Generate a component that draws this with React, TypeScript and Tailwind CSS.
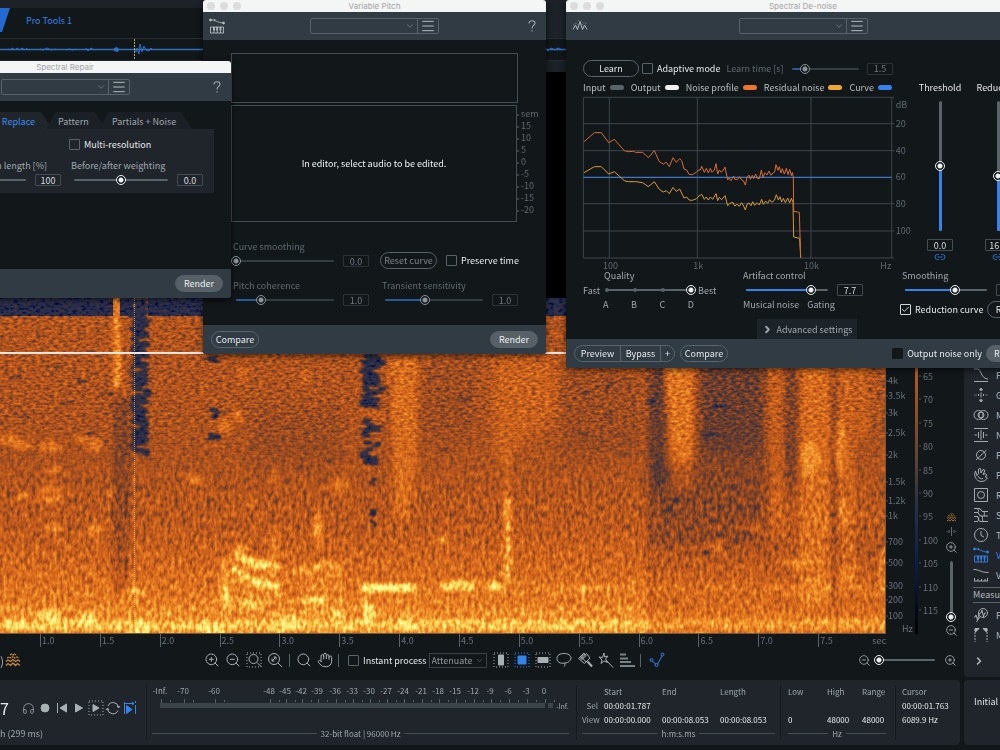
import React, { useState } from 'react';
import { Check, ChevronDown, ChevronRight, Hand, Headphones, Link2, Menu, Search, ZoomIn, ZoomOut } from 'lucide-react';
import clsx from 'clsx';

interface SliderProps {
    label: string;
    start: number;
    muted?: boolean;
    plain?: boolean;
    vertical?: boolean;
    className?: string;
}

const thumbStyle =
    '[&::-webkit-slider-thumb]:size-[10px] [&::-webkit-slider-thumb]:appearance-none [&::-webkit-slider-thumb]:rounded-full [&::-webkit-slider-thumb]:border [&::-webkit-slider-thumb]:border-current [&::-webkit-slider-thumb]:bg-[radial-gradient(circle,currentColor_0_2px,#12171a_3px)]';

function Slider({ label, start, muted, plain, vertical, className }: SliderProps) {
    const [value, setValue] = useState(start);
    const fill = plain ? '' : muted ? 'bg-[#2a5a96]' : 'bg-[#3583ea]';

    return (
        <div className={clsx('grid *:col-start-1 *:row-start-1', vertical ? 'justify-items-center' : 'items-center', className)}>
            <div
                className={clsx(
                    'flex rounded-full',
                    vertical ? 'my-[5px] w-[3px] flex-col justify-end' : 'mx-[5px] h-[2px]',
                    muted ? 'bg-[#343d42]' : 'bg-[#59636a]',
                )}
            >
                <div className={clsx('rounded-full', fill)} style={vertical ? { height: `${value}%` } : { width: `${value}%` }} />
            </div>
            <input
                type="range"
                aria-label={label}
                value={value}
                onChange={(e) => setValue(Number(e.target.value))}
                className={clsx(
                    'm-0 appearance-none bg-transparent outline-none',
                    thumbStyle,
                    vertical ? 'h-full w-[10px] [direction:rtl] [writing-mode:vertical-lr]' : 'h-[10px] w-full min-w-0',
                    muted ? 'text-[#8c9499]' : 'text-[#eef1f2]',
                )}
            />
        </div>
    );
}

function ValueBox({ label, value, muted }: { label: string; value: string; muted?: boolean }) {
    return (
        <input
            type="text"
            aria-label={label}
            defaultValue={value}
            className={clsx(
                'h-[12px] w-[26px] shrink-0 rounded-[1px] border bg-transparent p-0 text-center text-[9px] leading-[10px] outline-none',
                muted ? 'border-[#2b3338] text-[#737b80]' : 'border-[#434c52] text-[#d8dcde]',
            )}
        />
    );
}

interface ParamProps {
    label: string;
    value: string;
    start: number;
    muted?: boolean;
    plain?: boolean;
    className?: string;
}

function Param({ label, value, start, muted, plain, className }: ParamProps) {
    return (
        <div className={clsx('flex flex-col', className)}>
            <span className={clsx('pl-0.5', muted ? 'text-[#60696e]' : 'text-[#a0a8ac]')}>{label}</span>
            <div className="flex h-4 items-center gap-1">
                <Slider label={label} start={start} muted={muted} plain={plain} className="flex-1" />
                <ValueBox label={label} value={value} muted={muted} />
            </div>
        </div>
    );
}

function Checkbox({ label, checked = false, filled }: { label: string; checked?: boolean; filled?: boolean }) {
    return (
        <label className="flex items-center gap-1 text-[#e6e9eb]">
            <span className="grid size-[11px] *:col-start-1 *:row-start-1">
                <input
                    type="checkbox"
                    defaultChecked={checked}
                    className={clsx(
                        'peer m-0 size-[11px] appearance-none rounded-[1px] border checked:border-[#d0d5d8]',
                        filled ? 'border-[#12171a] bg-[#12171a]' : 'border-[#59636a]',
                    )}
                />
                <Check className="pointer-events-none invisible m-px size-[9px] text-white peer-checked:visible" strokeWidth={2} />
            </span>
            {label}
        </label>
    );
}

function Pill({ children, solid, muted, className }: { children: React.ReactNode; solid?: boolean; muted?: boolean; className?: string }) {
    return (
        <button
            type="button"
            className={clsx(
                'h-[17px] shrink-0 rounded-full border text-center leading-[15px]',
                solid ? 'border-[#566066] bg-[#566066] text-[#eceff0]' : muted ? 'border-[#566066] text-[#7c8489]' : 'border-[#59636a] text-[#e4e7e9]',
                className,
            )}
        >
            {children}
        </button>
    );
}

interface PluginWindowProps {
    title: string;
    className: string;
    icon?: React.ReactNode;
    footer: React.ReactNode;
    children: React.ReactNode;
}

function PluginWindow({ title, className, icon, footer, children }: PluginWindowProps) {
    return (
        <section className={clsx('absolute flex flex-col overflow-hidden rounded-[3px] bg-[#12171a] whitespace-nowrap shadow-[0_2px_6px_#0009]', className)}>
            <div className="grid h-[12px] shrink-0 grid-cols-[1fr_auto_1fr] items-center bg-[#f4f5f5] px-1">
                <div className="flex gap-[5px]">
                    <span className="size-2 rounded-full bg-[#dcdcdc]" />
                    <span className="size-2 rounded-full bg-[#dcdcdc]" />
                    <span className="size-2 rounded-full bg-[#dcdcdc]" />
                </div>
                <h2 className="font-[Inter,sans-serif] text-[8px] leading-[10px] text-[#a4a4a4]">{title}</h2>
            </div>
            <div className="grid h-[28px] shrink-0 grid-cols-[1fr_auto_1fr] items-center bg-[#303b43] px-[6px] text-[#b4bbbf]">
                <div>{icon}</div>
                <div className="flex h-4 rounded-[2px] border border-[#57626a]">
                    <div className="grid w-[106px] items-center *:col-start-1 *:row-start-1">
                        <select aria-label="Preset" className="h-full w-full appearance-none bg-transparent outline-none">
                            <option value="" />
                        </select>
                        <ChevronDown className="pointer-events-none mr-[2px] size-[10px] justify-self-end text-[#76828a]" />
                    </div>
                    <button type="button" aria-label="Preset menu" className="flex w-[21px] items-center justify-center border-l border-[#57626a]">
                        <Menu className="size-4" strokeWidth={1.5} />
                    </button>
                </div>
                <button type="button" aria-label="Help" className="mr-1 justify-self-end text-[#a4acb0]">
                    <svg className="h-3 w-2" viewBox="0 0 8 12" fill="none" stroke="currentColor" strokeWidth="1.100">
                        <path d="M1 3.500C1 1.500 2.300.700 4 .700s3 1 3 2.600C7 5.500 4 5.500 4 8.500M4 10.200v1.300" />
                    </svg>
                </button>
            </div>
            {children}
            <div className="flex h-[29px] shrink-0 items-center bg-[#303b43] px-2">{footer}</div>
        </section>
    );
}

function PitchIcon() {
    return (
        <svg className="size-4 shrink-0" viewBox="0 0 16 16" fill="none" stroke="currentColor" strokeWidth="0.900">
            <path d="M1 2c5-1 7 3 14 3" />
            <path d="M1.500 9h13v6h-13zM5 9v6M8.200 9v6M11.500 9v6" />
            <path d="M5 9v3.500M8.200 9v3.500M11.500 9v3.500" strokeWidth="1.800" />
            <circle cx="1.500" cy="2" r="1" fill="currentColor" />
            <circle cx="5.500" cy="2" r="0.600" fill="currentColor" />
            <circle cx="14.500" cy="5" r="1" fill="currentColor" />
        </svg>
    );
}

function DenoiseIcon() {
    return (
        <svg className="size-4" viewBox="0 0 16 16" fill="none" stroke="currentColor" strokeWidth="1">
            <path d="M1 11.500 3.500 7l2 4.500 2.500-8 2.500 8 2-4.500 2.500 4.500" />
            <path d="M1 6.500 4 5l2 2M10 7l2-2.500L15 6M6 3l1-1.500M10 3.500 9 2" strokeWidth="0.600" strokeDasharray="1 1" />
        </svg>
    );
}

function SpectralRepair() {
    return (
        <PluginWindow
            title="Spectral Repair"
            className="top-[61px] left-[-101px] h-[237px] w-[332px]"
            footer={
                <Pill solid className="ml-auto w-[48px]">
                    Render
                </Pill>
            }
        >
            <div className="flex flex-1 flex-col pt-[11px] pr-[17px] pl-[17px]">
                <div className="flex h-[17px] justify-end pr-[22px] text-[#a0a8ac]">
                    <button type="button" className="w-[68px] bg-[#1f252b] pt-0.5 pr-[18px] text-right text-[#3d8bf0] [clip-path:polygon(0_0,56px_0,100%_100%,0_100%)]">
                        Replace
                    </button>
                    <button type="button" className="-ml-1.5 w-[59px] bg-[#1a2025] pt-0.5 pl-[11px] text-left [clip-path:polygon(8px_0,48px_0,100%_100%,0_100%)]">
                        Pattern
                    </button>
                    <button type="button" className="-ml-1.5 w-[92px] bg-[#1a2025] pt-0.5 pl-[12px] text-left [clip-path:polygon(8px_0,81px_0,100%_100%,0_100%)]">
                        Partials + Noise
                    </button>
                </div>
                <div className="flex h-[64px] justify-end gap-2 bg-[#1f252b] pr-[11px]">
                    <div className="flex w-[134px] flex-col justify-end pb-[5px]">
                        <span className="pr-[14px] text-right text-[#a0a8ac]">Region length [%]</span>
                        <div className="flex h-4 items-center gap-1">
                            <Slider label="Region length" start={0} plain className="flex-1" />
                            <ValueBox label="Region length" value="100" />
                        </div>
                    </div>
                    <div className="flex w-[134px] flex-col justify-between pt-[9px] pb-[5px]">
                        <Checkbox label="Multi-resolution" />
                        <Param label="Before/after weighting" value="0.0" start={50} plain />
                    </div>
                </div>
            </div>
        </PluginWindow>
    );
}

const semitones: [string, number][] = [
    ['sem', 10], ['15', 22], ['10', 34], ['5', 46], ['0', 58], ['-5', 70], ['-10', 82], ['-15', 94], ['-20', 106],
];

function VariablePitch() {
    return (
        <PluginWindow
            title="Variable Pitch"
            className="top-0 left-[203px] h-[354px] w-[343px]"
            icon={<PitchIcon />}
            footer={
                <>
                    <Pill className="w-12">Compare</Pill>
                    <Pill solid className="ml-auto w-12">
                        Render
                    </Pill>
                </>
            }
        >
            <div className="flex flex-1 flex-col pt-[13px] pl-[28px]">
                <div className="mr-[28px] h-[50px] border border-[#454d52]" />
                <div className="mt-[2px] flex">
                    <div className="flex h-[117px] flex-1 items-center justify-center border border-[#454d52] text-[#f1f3f4]">
                        In editor, select audio to be edited.
                    </div>
                    <svg className="h-[117px] w-[29px] overflow-visible" fill="#60696e" fontSize="9">
                        {semitones.map(([text, y]) => (
                            <g key={text}>
                                <path d={`M0 ${y}h2`} stroke="#60696e" />
                                <text x="4" y={y + 2}>
                                    {text}
                                </text>
                            </g>
                        ))}
                    </svg>
                </div>
                <div className="mt-[18px] grid grid-cols-[138px_138px] items-end gap-x-[11px] gap-y-[10px]">
                    <Param label="Curve smoothing" value="0.0" start={0} muted />
                    <div className="flex items-center gap-[9px]">
                        <Pill muted className="w-[57px]">
                            Reset curve
                        </Pill>
                        <Checkbox label="Preserve time" />
                    </div>
                    <Param label="Pitch coherence" value="1.0" start={25} muted />
                    <Param label="Transient sensitivity" value="1.0" start={41} muted />
                </div>
            </div>
        </PluginWindow>
    );
}

const noiseProfile =
    'M57 155 88 128 109 128 131 158 148 148 178 182 190 185 205 184 212 187 233 187 250 203 268 182 283 215 295 222 304 217 313 230 324 203 334 217 344 206 350 212 357 237 365 240 372 253 382 254 395 246 400 240 406 240 410 229 418 247 424 235 430 249 436 235 441 247 448 240 453 221 458 252 463 240 469 247 475 240 480 231 488 270 492 264 498 272 506 258 510 269 518 268 523 260 530 270 535 272 541 285 546 262 552 255 556 268 562 256 566 266 572 252 577 265 583 266 589 240 594 262 600 248 606 255 612 243 618 256 624 249 629 246 633 224 639 241 643 230 648 249 652 236 658 252 664 235 669 254 674 238 679 257 682 247 685 262 686 364 703 367 707 503';
const residualNoise =
    'M57 248 88 230 109 230 131 252 148 245 178 272 190 275 212 275 233 278 250 290 268 275 283 298 295 306 304 302 313 311 324 292 334 304 344 297 357 324 365 321 372 330 382 331 395 326 402 318 410 313 418 328 424 321 430 330 436 321 443 328 453 311 458 332 463 322 470 329 480 317 488 347 495 340 504 337 509 348 516 343 523 349 530 338 536 348 541 360 547 341 552 339 558 347 563 335 569 346 576 338 583 345 590 328 595 343 602 333 608 340 614 329 620 337 628 331 634 314 640 330 645 320 650 336 655 325 661 338 668 324 674 339 679 325 684 336 686 441 704 445 707 503';

const legend = [
    { name: 'Input', color: 'bg-[#59636a]' },
    { name: 'Output', color: 'bg-[#f1f3f3]' },
    { name: 'Noise profile', color: 'bg-[#ee7430]' },
    { name: 'Residual noise', color: 'bg-[#f0a632]' },
    { name: 'Curve', color: 'bg-[#3583ea]' },
];

function NoiseGraph() {
    return (
        <svg className="h-[172px] w-[330px] overflow-visible" viewBox="54 21 990 516" fill="none">
            <g stroke="#3e464b" strokeWidth="3">
                <path d="M55 101h932M55 182h932M55 341h932M55 423h932" />
                <path d="M133 21v483M397 21v483M738 21v483" />
                <path d="M55 22h932M55 504h932M55 22v482M980 22v482" />
            </g>
            <path d="M55 262h925" stroke="#3d78c8" strokeWidth="4" />
            <path d={residualNoise} stroke="#d99a38" strokeWidth="3" />
            <path d={noiseProfile} stroke="#d86c36" strokeWidth="3" />
            <g fill="#60696e" fontSize="27">
                <text x="992" y="54">dB</text>
                <text x="992" y="110">20</text>
                <text x="992" y="191">40</text>
                <text x="992" y="271">60</text>
                <text x="992" y="350">80</text>
                <text x="992" y="432">100</text>
                <text x="114" y="537">100</text>
                <text x="385" y="537">1k</text>
                <text x="717" y="537">10k</text>
                <text x="946" y="537">Hz</text>
            </g>
        </svg>
    );
}

function Fader({ label, value, start }: { label: string; value: string; start: number }) {
    return (
        <div className="flex w-[58px] flex-col items-center">
            <span className="text-[#e4e7e9]">{label}</span>
            <Slider vertical label={label} start={start} className="mt-[2px] mb-[3px] h-[140px]" />
            <ValueBox label={label} value={value} />
            <Link2 className="size-3 text-[#2f6fc4]" />
        </div>
    );
}

function SpectralDenoise() {
    return (
        <PluginWindow
            title="Spectral De-noise"
            className="top-0 left-[566px] h-[368px] w-[474px]"
            icon={<DenoiseIcon />}
            footer={
                <>
                    <div className="mr-[5px] flex h-[17px] divide-x divide-[#59636a] rounded-full border border-[#59636a] text-[#e4e7e9]">
                        <button type="button" className="w-[46px]">Preview</button>
                        <button type="button" className="w-[40px]">Bypass</button>
                        <button type="button" className="w-[13px]">+</button>
                    </div>
                    <Pill className="w-12">Compare</Pill>
                    <div className="ml-auto flex items-center gap-1">
                        <Checkbox label="Output noise only" filled />
                        <Pill solid className="w-[46px]">Render</Pill>
                    </div>
                </>
            }
        >
            <div className="flex flex-1 flex-col pl-[17px]">
                <div className="flex">
                    <div className="w-[328px] pt-[20px]">
                        <div className="flex w-[310px] items-center gap-[3px]">
                            <Pill className="w-14">Learn</Pill>
                            <Checkbox label="Adaptive mode" />
                            <span className="ml-[3px] text-[#60696e]">Learn time [s]</span>
                            <Slider label="Learn time" start={20} muted className="flex-1" />
                            <ValueBox label="Learn time" value="1.5" muted />
                        </div>
                        <div className="mt-1 mb-[3px] flex w-[309px] justify-between text-[#b8bec1]">
                            {legend.map((item) => (
                                <span key={item.name} className="flex items-center gap-1">
                                    {item.name}
                                    <i className={clsx('h-[5px] w-[14px] rounded-full', item.color)} />
                                </span>
                            ))}
                        </div>
                        <NoiseGraph />
                    </div>
                    <div className="flex pt-[41px]">
                        <Fader label="Threshold" value="0.0" start={50} />
                        <Fader label="Reduction" value="16.0" start={42} />
                    </div>
                </div>
                <div className="flex text-[#a0a8ac]">
                    <div className="w-[158px]">
                        <div className="pl-[21px]">Quality</div>
                        <div className="flex h-4 items-center gap-[2px]">
                            Fast
                            <div className="grid w-[94px] items-center *:col-start-1 *:row-start-1">
                                <div className="mx-[3px] flex justify-between">
                                    <span className="size-1 rounded-full bg-[#59636a]" />
                                    <span className="size-1 rounded-full bg-[#59636a]" />
                                    <span className="size-1 rounded-full bg-[#59636a]" />
                                    <span className="size-1 rounded-full bg-[#59636a]" />
                                </div>
                                <Slider label="Quality" start={100} plain />
                            </div>
                            Best
                        </div>
                        <div className="ml-[20px] flex w-[91px] justify-between">
                            <span>A</span>
                            <span>B</span>
                            <span>C</span>
                            <span>D</span>
                        </div>
                    </div>
                    <div className="w-[159px]">
                        <Param label="Artifact control" value="7.7" start={79} className="w-[122px]" />
                        <div className="flex gap-2 pl-0.5">
                            <span>Musical noise</span>
                            <span>Gating</span>
                        </div>
                    </div>
                    <div>
                        <Param label="Smoothing" value="6.0" start={61} className="w-[122px]" />
                        <div className="mt-[3px] flex items-center gap-1">
                            <Checkbox label="Reduction curve" checked />
                            <Pill className="w-10">Reset</Pill>
                        </div>
                    </div>
                </div>
                <button type="button" className="mt-auto ml-[174px] flex h-5 w-[100px] items-center justify-center gap-1 bg-[#1d2429] text-[#a0a8ac]">
                    <ChevronRight className="size-[11px]" strokeWidth={4} />
                    Advanced settings
                </button>
            </div>
        </PluginWindow>
    );
}

const spots = [
    [10, 142, 12, 5], [22, 148, 10, 4], [50, 149, 11, 6], [95, 147, 6, 7], [82, 141, 8, 4], [53, 172, 9, 4], [22, 199, 7, 4], [50, 197, 13, 9],
    [110, 195, 4, 5], [55, 230, 9, 6], [95, 232, 9, 6], [195, 182, 9, 5], [225, 128, 6, 8], [238, 118, 5, 6], [250, 204, 7, 3], [275, 178, 3, 6],
    [340, 187, 9, 7], [318, 228, 5, 10], [240, 250, 7, 5], [305, 79, 3, 6], [242, 76, 3, 8], [443, 243, 4, 5], [442, 240, 4, 4], [796, 266, 13, 5],
    [715, 250, 9, 5], [756, 230, 5, 6], [848, 279, 10, 6], [840, 150, 5, 30], [843, 215, 3, 15], [810, 160, 10, 18], [884, 270, 4, 24],
];

const hot = [
    [140, 332, 10, 9], [213, 332, 13, 7], [278, 332, 6, 6], [226, 300, 6, 9], [370, 318, 5, 12], [134, 293, 10, 4], [15, 326, 12, 5], [50, 318, 12, 7],
    [88, 322, 8, 8], [407, 326, 8, 8], [338, 316, 6, 6], [315, 302, 14, 4], [252, 306, 12, 4], [290, 324, 10, 8], [583, 293, 3, 5],
];

const gaps = [
    [132, 0, 16, 158], [208, 58, 10, 7], [209, 110, 10, 4], [213, 114, 6, 7], [208, 136, 11, 6], [362, 56, 17, 54], [378, 62, 8, 6], [380, 88, 6, 5],
    [366, 96, 12, 16], [363, 121, 8, 45], [370, 128, 10, 5], [374, 144, 6, 5], [366, 158, 12, 9], [371, 180, 4, 8], [371, 211, 7, 6], [372, 222, 4, 7],
    [703, 135, 14, 3], [712, 107, 15, 3], [652, 100, 6, 5],
];

const shadows = [
    [666, 210, 9, 4], [674, 200, 6, 4], [705, 250, 7, 6], [606, 83, 5, 8], [582, 93, 5, 4], [582, 134, 5, 4], [450, 100, 16, 2], [606, 117, 7, 2],
    [10, 78, 12, 2], [50, 68, 10, 2], [80, 82, 9, 3], [100, 95, 12, 2], [60, 104, 12, 2], [85, 134, 8, 3], [18, 118, 12, 2], [440, 150, 6, 4],
];

// streaks of sound that cut into the empty regions
const cuts = [
    'M139 42h12M140 62h9M132 72h8M142 89h13M130 95h10M142 108h8M144 117h8M130 128h9M138 149h12M131 156h9',
    'M374 72h12M370 90h10M374 98h15M360 111h18M360 116h28M372 122h12M362 141h12M360 148h14M372 156h8',
    'M206 66h10M205 100h16M212 124h10M206 148h18',
];

function Loudness() {
    return (
        <>
            <rect width="886" height="336" fill="url(#level)" />
            <g filter="url(#broad)">
                <path d="M652 60h12v130h-12z" fill="#000" opacity="0.400" />
                <path d="M700 40h64v120h-64z" fill="#000" opacity="0.300" />
                <path d="M652 165h114v80H652z" fill="#000" opacity="0.200" />
                <path d="M785 60h12v130h-12z" fill="#000" opacity="0.260" />
                <path d="M495 60h60v60l-55 45h-6z" fill="#fff" opacity="0.140" />
                <path d="M560 70h80v90h-80zM425 60h50v80h-50zM250 110h90v60h-90z" fill="#000" opacity="0.080" />
            </g>
            <g filter="url(#soft)">
                <path d="M113 100h17v195h-17z" fill="#000" opacity="0.180" />
                <path d="M648 60h4v276h-4z" fill="#000" opacity="0.150" />
                <path d="M648 235h238v101H648z" fill="#000" opacity="0.100" />
                <path d="M800 60h31v245h-31z" fill="#fff" opacity="0.210" />
                <path d="M830 60h7v250h-7z" fill="#000" opacity="0.160" />
                <path d="M838 60h17v220h-17z" fill="#fff" opacity="0.140" />
                <path d="M858 60h10v80h-10z" fill="#fff" opacity="0.140" />
                <path d="M664 60h29v105h-21z" fill="#fff" opacity="0.280" />
                <path d="M672 165h21v26h-21z" fill="#fff" opacity="0.140" />
                <path d="M768 60h16v180h-12z" fill="#fff" opacity="0.110" />
                <path d="M390 60h27v100l-8 60h-14z" fill="#fff" opacity="0.220" />
                <path d="M114 0h5l2 90h-7z" fill="#fff" opacity="0.500" />
                <path d="M505 150h4v50h-4z" fill="#fff" opacity="0.250" />
                <path d="M504 200h7l-1 85h-5z" fill="#fff" opacity="0.550" />
                <path d="M222 258v52h60v-52zM303 264v56h42v-56z" fill="#fff" opacity="0.140" />
                {spots.map(([x, y, rx, ry], i) => (
                    <ellipse key={i} cx={x} cy={y} rx={rx} ry={ry} fill="#fff" opacity="0.300" />
                ))}
                <g stroke="#fff" fill="none" strokeWidth="7">
                    <path d="M234 254l22 12 22 3M232 270l22 14 26 4" opacity="0.750" />
                    <path d="M248 265l28 4M250 282l30 5" strokeWidth="6" opacity="0.500" />
                    <path d="M275 232v30" strokeWidth="4" opacity="0.400" />
                    <path d="M290 273h20l14-7 18 4M224 262l2 40M318 214v34" strokeWidth="5" opacity="0.420" />
                    <path d="M360 290h55" strokeWidth="9" opacity="0.850" />
                    <path d="M442 288h32M488 288h14" strokeWidth="8" opacity="0.800" />
                    <path d="M415 290h471" opacity="0.140" />
                    <path d="M0 327h648" strokeWidth="11" opacity="0.500" />
                    <path d="M648 326h238" strokeWidth="11" opacity="0.320" />
                    <path d="M0 314h648" opacity="0.160" />
                    <path d="M366 300l2 24" opacity="0.600" />
                </g>
                {hot.map(([x, y, rx, ry], i) => (
                    <ellipse key={i} cx={x} cy={y} rx={rx} ry={ry} fill="#fff" opacity="0.600" />
                ))}
            </g>
            <path d="M0 0h113v18H0zM120 0h13v18h-13zM148 0h738v18H148z" fill="#202020" />
            <g filter="url(#ragged)">
                {gaps.map(([x, y, w, h], i) => (
                    <rect key={i} x={x} y={y} width={w} height={h} fill="#1c1c1c" opacity="0.920" />
                ))}
                {shadows.map(([x, y, w, h], i) => (
                    <rect key={i} x={x} y={y} width={w} height={h} fill="#1c1c1c" opacity="0.550" />
                ))}
                {cuts.map((d) => (
                    <path key={d} d={d} stroke="#8a8a8a" strokeWidth="2.500" />
                ))}
            </g>
        </>
    );
}

function HeatFilter({ id, frequency, seed }: { id: string; frequency: string; seed: number }) {
    return (
        <filter id={id} x="0" y="0" width="100%" height="100%" colorInterpolationFilters="sRGB">
            <feTurbulence type="fractalNoise" baseFrequency={frequency} numOctaves={2} seed={seed} />
            <feColorMatrix values="1 0 0 0 0  1 0 0 0 0  1 0 0 0 0  0 0 0 0 1" result="grain" />
            <feComposite in="SourceGraphic" in2="grain" operator="arithmetic" k1="0.400" k2="0.800" k3="0.350" k4="-0.190" />
            <feComponentTransfer>
                <feFuncR type="table" tableValues="0.02 0.15 0.23 0.42 0.63 0.79 0.89 0.95 0.98 1 1" />
                <feFuncG type="table" tableValues="0.04 0.18 0.20 0.24 0.30 0.37 0.46 0.58 0.75 0.90 0.98" />
                <feFuncB type="table" tableValues="0.25 0.30 0.25 0.17 0.12 0.11 0.12 0.17 0.28 0.42 0.60" />
            </feComponentTransfer>
            <feGaussianBlur stdDeviation="0.400" />
        </filter>
    );
}

function Spectrogram() {
    return (
        <svg className="block h-[336px] w-full" viewBox="0 0 886 336" preserveAspectRatio="none">
            <defs>
                <linearGradient id="level" x1="0" y1="0" x2="0" y2="1">
                    <stop offset="0" stopColor="#757575" />
                    <stop offset="0.450" stopColor="#717171" />
                    <stop offset="0.680" stopColor="#7c7c7c" />
                    <stop offset="0.820" stopColor="#919191" />
                    <stop offset="0.920" stopColor="#a4a4a4" />
                    <stop offset="1" stopColor="#a8a8a8" />
                </linearGradient>
                <linearGradient id="fade" x1="0" y1="0" x2="0" y2="1">
                    <stop offset="0.350" stopColor="#fff" />
                    <stop offset="0.600" stopColor="#000" />
                </linearGradient>
                <mask id="upper">
                    <rect width="886" height="336" fill="url(#fade)" />
                </mask>
                <filter id="broad">
                    <feGaussianBlur stdDeviation="4 9" />
                </filter>
                <filter id="soft" colorInterpolationFilters="sRGB">
                    <feGaussianBlur stdDeviation="2" />
                </filter>
                <filter id="ragged" colorInterpolationFilters="sRGB">
                    <feTurbulence type="fractalNoise" baseFrequency="0.010 0.300" numOctaves={1} seed={2} />
                    <feColorMatrix values="1 0 0 0 0  0 0 0 0 0.5  0 0 0 0 0  0 0 0 0 1" result="shift" />
                    <feDisplacementMap in="SourceGraphic" in2="shift" scale="16" xChannelSelector="R" yChannelSelector="G" />
                    <feGaussianBlur stdDeviation="0.800" />
                </filter>
                <HeatFilter id="heatLow" frequency="0.280 0.150" seed={4} />
                <HeatFilter id="heatHigh" frequency="0.220 0.400" seed={9} />
            </defs>
            <g filter="url(#heatLow)">
                <Loudness />
            </g>
            <g mask="url(#upper)">
                <g filter="url(#heatHigh)">
                    <Loudness />
                </g>
            </g>
            <path d="M0 55h886" stroke="#f3e6e0" strokeWidth="2" />
            <path d="M134.500 0v336" stroke="#e8c96a" strokeDasharray="1 1" opacity="0.700" />
            <path d="M885.500 0v336M0 335.500h886" stroke="#6b5a48" />
        </svg>
    );
}

const hertz: [string, number][] = [
    ['4k', 83], ['3.5k', 98], ['3k', 115], ['2.5k', 135], ['2k', 157], ['1.5k', 184], ['1.2k', 203], ['1k', 218], ['700', 244], ['500', 265],
    ['300', 288], ['200', 302], ['100', 318],
];
const levels = [65, 70, 75, 80, 85, 90, 95, 100, 105, 110, 115];

function Scales() {
    return (
        <svg className="h-[336px] w-[56px] shrink-0" fill="#69727a" fontSize="9">
            <defs>
                <linearGradient id="legendBar" x1="0" y1="0" x2="0" y2="1">
                    <stop offset="0.200" stopColor="#b85a22" />
                    <stop offset="0.450" stopColor="#6e4530" />
                    <stop offset="0.600" stopColor="#2d3144" />
                    <stop offset="0.800" stopColor="#0c1c4a" />
                    <stop offset="1" stopColor="#000" />
                </linearGradient>
            </defs>
            <rect x="29" width="3" height="336" fill="url(#legendBar)" />
            {hertz.map(([text, y]) => (
                <g key={text}>
                    <path d={`M0 ${y}h2`} stroke="#4c555a" />
                    <text x="2" y={y + 3}>{text}</text>
                </g>
            ))}
            <text x="16" y="334">Hz</text>
            {levels.map((level, i) => (
                <g key={level}>
                    <path d={`M33 ${Math.round(78 + i * 23.4)}h2`} stroke="#4c555a" />
                    <text x="37" y={Math.round(82 + i * 23.4)}>{level}</text>
                </g>
            ))}
        </svg>
    );
}

function SpectroIcon({ className }: { className: string }) {
    return (
        <svg className={className} viewBox="0 0 16 14" fill="none" stroke="#c98a35" strokeWidth="1.300">
            <path d="M1 12.500l2-2 2.500 2L8 10l2.500 2.500 2-2 2.500 2M1 8.500l2-1.500 2.500 1.500L8 6.500l2.500 2L13 7l2 1.500" />
            <path d="M2 5l2-1 2 1 2-1.500L10 5l2-1 2 1M5 2l1.500-1L8 2l1.500-1L11 2" strokeDasharray="2 0.700" />
        </svg>
    );
}

const moduleIcons: { name: string; art: React.ReactNode }[] = [
    { name: 'Fade', art: <path d="M1 2h4c3 0 3 10 10 10M1 14.500h14" /> },
    { name: 'Gain', art: <path d="M8 1v3M6.500 3 8 1l1.500 2zM8 15v-3M6.500 13 8 15l1.500-2zM8 5.500v5M5.500 7v2M10.500 7v2M3 7.500v1M13 7.500v1M1 8h.5M14.500 8h.5" /> },
    { name: 'Mixing', art: <><circle cx="5.500" cy="8" r="4.500" /><circle cx="10.500" cy="8" r="4.500" /><circle cx="8" cy="8" r="3" /></> },
    { name: 'Normalize', art: <path d="M1 1.500h14M1 14.500h14M8 3v10M5.500 5v6M10.500 5v6M3 7v2M13 7v2M1 8h.5M14.500 8h.5" /> },
    { name: 'Phase', art: <><circle cx="8" cy="8" r="4.500" /><path d="M3 13 13.500 3" /></> },
    { name: 'Plug-in', art: <path d="M2.500 4c-2 4 0 10 5.500 10.500 3 .2 5-1.500 6.500-3.500L12 9.500l2-1-1.500-2-2.500 1 2-4-2-1L8 6l-.5-4.500-2 .5v4.500L4 8.500 2.500 4zM5 9c1 2.500 3 3 5 2.500" /> },
    { name: 'Resample', art: <><path d="M1.500 1.500h13v13h-13z" /><circle cx="8" cy="8" r="3.500" /></> },
    { name: 'Signal Generator', art: <path d="M1 1.500h5c3 0 1 3 4 3h5M1 5.500h3c3 0 1 3.500 4 3.500h7M1 9.500h3c3 0 0 5 4 5h7M10 4.500c3 0 0 4.500 2 4.500M6 1.500c-3 0 2 4-2 4M8 9c3 0 0 5.500 3 5.500M1 14.500h3c3 0 1-5 0-5" /> },
    { name: 'Time & Pitch', art: <><circle cx="8" cy="8" r="6.500" /><path d="M8 4v4.500l3 1.500" /></> },
    { name: 'Variable Pitch', art: null },
    { name: 'Variable Time', art: <path d="M1 2.500c5 0 7 3 14 3M.5 2.500h2M13.500 5.500h2M1 14h14M1.500 11v3M5 12v2M8.500 12v2M12 12v2M14.500 11v3" /> },
];

const measureIcons = [
    { name: 'Find Similar', art: <><circle cx="10" cy="6" r="4.500" /><path d="M7 9.500 3.500 15M1 10h1l1-2 1.500 5L6 7l1-1h1l1-3 1.500 7 1-4H13" /></> },
    { name: 'Markers', art: <><path d="M2 1.500h4L2.500 5zM14 1.500h-4L13.500 5z" fill="currentColor" /><path d="M2 2v13M14 2v13" strokeDasharray="2 1" /></> },
];

function ModuleRow({ name, art }: { name: string; art: React.ReactNode }) {
    const active = name === 'Variable Pitch';
    return (
        <button type="button" className={clsx('flex h-5 shrink-0 items-center gap-[7px] pl-[9px] whitespace-nowrap', active ? 'text-[#3583ea]' : 'text-[#b2b9bd]')}>
            {active ? (
                <PitchIcon />
            ) : (
                <svg className="size-4 shrink-0" viewBox="0 0 16 16" fill="none" stroke="currentColor" strokeWidth="0.900">
                    {art}
                </svg>
            )}
            {name}
        </button>
    );
}

const iconButton = 'flex size-4 shrink-0 items-center justify-center';

function Tool({ name, children, color = 'text-[#a8b0b4]' }: { name: string; children: React.ReactNode; color?: string }) {
    return (
        <button type="button" aria-label={name} className={clsx(iconButton, color)}>
            <svg className="size-4" viewBox="0 0 16 16" fill="none" stroke="currentColor" strokeWidth="1">
                {children}
            </svg>
        </button>
    );
}

function Toolbar() {
    return (
        <div className="flex h-[34px] shrink-0 items-center pr-[3px] pb-[6px] text-[#a8b0b4]">
            <span className="w-[5px] text-[12px]">)</span>
            <SpectroIcon className="h-[14px] w-[16px]" />
            <div className="ml-[183px] flex items-center gap-[5px]">
                <button type="button" aria-label="Zoom in" className={iconButton}><ZoomIn className="size-4" strokeWidth={1.5} /></button>
                <button type="button" aria-label="Zoom out" className={iconButton}><ZoomOut className="size-4" strokeWidth={1.5} /></button>
                <Tool name="Zoom to selection">
                    <path d="M1 1h14v14H1z" strokeDasharray="1 2" />
                    <circle cx="7.500" cy="7" r="4.500" />
                    <path d="M11 10.500l4 4" />
                </Tool>
                <Tool name="Zoom reset">
                    <circle cx="7" cy="7" r="5.500" />
                    <path d="M11 11l4 4M5 9l4-4M6.500 5H9v2.500M5 6.500V9h2.500" />
                </Tool>
                <span className="mx-px h-[13px] w-px bg-[#59636a]" />
                <button type="button" aria-label="Find" className={iconButton}><Search className="size-4" strokeWidth={1.5} /></button>
                <button type="button" aria-label="Grab" className={iconButton}><Hand className="size-4" strokeWidth={1.5} /></button>
                <span className="h-[13px] w-px bg-[#59636a]" />
            </div>
            <div className="ml-[9px] flex items-center gap-[2px]">
                <Checkbox label="Instant process" />
                <div className="grid h-[15px] w-[58px] items-center border border-[#3a4247] *:col-start-1 *:row-start-1">
                    <select aria-label="Instant process mode" className="h-full w-full appearance-none bg-transparent pl-[2px] text-[#8f979b] outline-none">
                        <option>Attenuate</option>
                    </select>
                    <ChevronDown className="pointer-events-none mr-[2px] size-[9px] justify-self-end text-[#59636a]" />
                </div>
            </div>
            <div className="ml-[6px] flex items-center gap-[5px]">
                <Tool name="Time selection">
                    <path d="M1 1h14v14H1z" strokeDasharray="1 2" />
                    <path d="M5.500 3h5v10h-5z" fill="currentColor" />
                </Tool>
                <Tool name="Time and frequency selection" color="text-[#3583ea]">
                    <path d="M1 1h14v14H1z" strokeDasharray="1 2" />
                    <path d="M4 4h8v8H4z" fill="currentColor" />
                </Tool>
                <Tool name="Frequency selection">
                    <path d="M1 1h14v14H1z" strokeDasharray="1 2" />
                    <path d="M3 5.500h10v5H3z" fill="currentColor" />
                </Tool>
                <Tool name="Lasso">
                    <path d="M9 11c-5 1-8-1-8-4.500S4 1.500 8 1.500s7 2 7 4.500-3 5-6 5c-1 1 1 2-1 3.500" />
                </Tool>
                <Tool name="Brush">
                    <path d="M1.500 6.500 7 1l1 2 1.500-1.500L13 6l-5.500 5.500zM4 4.500l5 5.500" />
                    <path d="M3 5.500 7.500 2l2 2-5 4z" fill="currentColor" opacity="0.600" />
                    <path d="M10.500 9.500 15 14.500" strokeWidth="2.200" />
                </Tool>
                <Tool name="Magic wand">
                    <path d="M6 1l.5 4L10 4 7.500 7l2 3.500L6 9l-3 2.500L4 8 1 5l3.500.5zM8 8l7 7.500" />
                </Tool>
                <Tool name="Harmonics">
                    <path d="M1 2.500h6M1 6.500h8M1 10h11M1 14h15" strokeWidth="2.200" opacity="0.700" />
                </Tool>
                <span className="h-[13px] w-px bg-[#59636a]" />
            </div>
            <div className="ml-2">
                <Tool name="Curve" color="text-[#3583ea]">
                    <path d="M2.500 8.500 8 13l5.500-10" />
                    <circle cx="2.500" cy="8" r="1.500" fill="#12171a" />
                    <circle cx="7.500" cy="13" r="1.500" fill="#12171a" />
                    <circle cx="13.500" cy="2.500" r="1.500" fill="#12171a" />
                </Tool>
            </div>
            <div className="ml-auto flex items-center">
                <ZoomOut className="size-[13px]" strokeWidth={1.5} />
                <Slider label="Horizontal zoom" start={0} className="mr-1 ml-[3px] w-[66px]" />
                <ZoomIn className="size-[13px]" strokeWidth={1.5} />
            </div>
        </div>
    );
}

const meterMarks: [string, number][] = [
    ['-Inf.', 8], ['-70', 31], ['-60', 62], ['-48', 117], ['-45', 133], ['-42', 149], ['-39', 165], ['-36', 183], ['-33', 200], ['-30', 217],
    ['-27', 234], ['-24', 251], ['-21', 269], ['-18', 286], ['-15', 303], ['-12', 321], ['-9', 338], ['-6', 356], ['-3', 374], ['0', 392],
];

function Meter() {
    return (
        <svg className="h-[26px] w-full" fill="#a0a8ac" fontSize="8">
            {meterMarks.map(([text, x]) => (
                <g key={text}>
                    <text x={x} y="9" textAnchor="middle">{text}</text>
                    <path d={`M${x + 1.5} 14v4M${x + 10.5} 15v2`} stroke="#59636a" />
                </g>
            ))}
            <path d="M8 18h385v5H8zM396 18h5v5h-5z" fill="#3b4449" />
            <text x="404" y="24" fontSize="7">-Inf.</text>
        </svg>
    );
}

function Rule({ children }: { children: React.ReactNode }) {
    return (
        <div className="flex items-center gap-1 whitespace-nowrap text-[#a0a8ac]">
            <span className="h-px flex-1 bg-[#434c52]" />
            {children}
            <span className="h-px flex-1 bg-[#434c52]" />
        </div>
    );
}

function StatusBar() {
    return (
        <div className="flex h-[65px] shrink-0 divide-x divide-[#161b1e] overflow-hidden rounded-r-[4px] bg-[#1f252b] py-[5px] text-[8px] text-[#a0a8ac]">
            <div className="flex w-[147px] shrink-0 flex-col justify-between">
                <div className="flex h-[42px] items-center gap-px pt-1">
                    <span className="w-[19px] text-[16px] text-[#e4e7e9]">7</span>
                    <button type="button" aria-label="Monitor" className={iconButton}><Headphones className="size-[13px]" strokeWidth={1.5} /></button>
                    <Tool name="Record"><circle cx="8" cy="8" r="4" fill="currentColor" /></Tool>
                    <Tool name="Rewind"><path d="M3.500 3v10" /><path d="M12.500 4v8L6 8z" fill="currentColor" /></Tool>
                    <Tool name="Play"><path d="M4.500 4v8l7-4z" fill="currentColor" /></Tool>
                    <Tool name="Play selection">
                        <path d="M1 1h14v14H1z" strokeDasharray="1 2" />
                        <path d="M5 4.500v7l6-3.500z" fill="currentColor" />
                    </Tool>
                    <Tool name="Loop"><path d="M3 6a5.500 5.500 0 0 1 10.500 1M13 10.500A5.500 5.500 0 0 1 2.500 9M12 6l1.500 2 1.500-2M1 10l1.500-2L4 10" /></Tool>
                    <Tool name="Follow playhead" color="text-[#3583ea]"><path d="M2.500 2v12M13.500 5v9M3 3.500h9M10 2l2 1.500-2 1.500M13.500 1v2" /><path d="M4.500 5.500v8L10 9.500z" fill="currentColor" /></Tool>
                </div>
                <span className="text-[9px]">h (299 ms)</span>
            </div>
            <div className="flex flex-1 flex-col justify-between pr-[7px] pl-[5px]">
                <Meter />
                <Rule>32-bit float | 96000 Hz</Rule>
            </div>
            <div className="flex w-[204px] shrink-0 flex-col justify-between px-[5px]">
                <table className="w-full table-fixed text-left leading-[14px] [&_td]:text-[#e6e9eb]">
                    <thead>
                        <tr>
                            <th className="w-[22px]" />
                            <th className="w-[58px] font-normal">Start</th>
                            <th className="w-[58px] font-normal">End</th>
                            <th className="font-normal">Length</th>
                        </tr>
                    </thead>
                    <tbody>
                        <tr>
                            <th className="pr-[6px] text-right font-normal">Sel</th>
                            <td>00:00:01.787</td>
                            <td />
                            <td />
                        </tr>
                        <tr>
                            <th className="pr-[6px] text-right font-normal">View</th>
                            <td>00:00:00.000</td>
                            <td>00:00:08.053</td>
                            <td>00:00:08.053</td>
                        </tr>
                    </tbody>
                </table>
                <Rule>h:m:s.ms</Rule>
            </div>
            <div className="flex w-[115px] shrink-0 flex-col justify-between pr-[9px] pl-[7px]">
                <table className="w-full table-fixed text-left leading-[14px] [&_td]:text-[#e6e9eb]">
                    <thead>
                        <tr>
                            <th className="w-[39px] font-normal">Low</th>
                            <th className="w-[35px] font-normal">High</th>
                            <th className="font-normal">Range</th>
                        </tr>
                    </thead>
                    <tbody>
                        <tr>
                            <td className="pt-[14px]">0</td>
                            <td className="pt-[14px]">48000</td>
                            <td className="pt-[14px]">48000</td>
                        </tr>
                    </tbody>
                </table>
                <Rule>Hz</Rule>
            </div>
            <dl className="w-[64px] shrink-0 pl-[6px] leading-[14px]">
                <dt>Cursor</dt>
                <dd className="text-[#e6e9eb]">00:00:01.763</dd>
                <dd className="text-[#e6e9eb]">6089.9 Hz</dd>
            </dl>
        </div>
    );
}

const seconds = ['1.0', '1.5', '2.0', '2.5', '3.0', '3.5', '4.0', '4.5', '5.0', '5.5', '6.0', '6.5', '7.0', '7.5'];

export default function App() {
    return (
        <div className="relative flex h-screen min-h-[700px] gap-1 overflow-hidden bg-[#12171a] pb-[5px] font-['Noto_Sans_CJK_SC','Noto_Sans',sans-serif] text-[9px] leading-[13px]">
            <main className="flex min-w-0 flex-1 flex-col">
                <header className="bg-[#1c2228] pt-2">
                    <div className="flex h-[30px] w-[540px] bg-[#12171a]">
                        <div className="h-6 w-[10px] bg-[#2469cf] [clip-path:polygon(0_0,100%_0,20%_100%,0_100%)]" />
                        <button type="button" className="h-6 pl-4 text-[#3583ea]">Pro Tools 1</button>
                    </div>
                </header>
                <svg className="h-[23px] w-full shrink-0 border-y border-[#262d32]" fill="none" stroke="#2f6fc4">
                    <path d="M0 10.500h960" strokeWidth="1.500" />
                    <path
                        d="M8 10l2 1 2-2 3 2 2-2 3 2 2-2 3 2 2-2M40 10l3 1 4-2 4 2 5-1M66 11l3-1 4 1 3-1M86 9l2 3 3-3 3 2M134 10l2 3 1-4 2 6 1-10 2 8 2-6 2 4 3 1 2-3 2 2M545 9l3 3 3-3 4 2 3-2 4 2"
                        strokeWidth="1"
                    />
                    <path d="M114.500 9v3h2.500v1l2-2.500-2-2V9z" fill="#2f6fc4" />
                    <path d="M134.500 0v23" stroke="#e8c96a" strokeDasharray="2 1" opacity="0.800" />
                </svg>
                <div className="h-[11px] shrink-0 bg-[#1b2126]" />
                <div className="flex min-h-0 flex-1">
                    <div className="flex flex-1 flex-col justify-end bg-black">
                        <Spectrogram />
                    </div>
                    <div className="flex items-end">
                        <Scales />
                        <div className="-mb-[3px] flex w-[18px] flex-col items-center text-[#a8b0b4]">
                            <SpectroIcon className="h-[9px] w-[11px]" />
                            <svg className="my-[5px] h-[9px] w-[11px]" viewBox="0 0 11 9" stroke="#69727a" strokeWidth="0.900">
                                <path d="M1 4v1M3 3v3M5.500 0v9M8 3v3M10 4v1" />
                            </svg>
                            <ZoomIn className="size-[13px]" strokeWidth={1.5} />
                            <Slider vertical plain label="Vertical zoom" start={0} className="mt-[2px] h-[66px]" />
                            <ZoomOut className="mt-[2px] size-[13px]" strokeWidth={1.5} />
                        </div>
                    </div>
                </div>
                <div className="relative mr-[74px] h-[12px] shrink-0">
                    <div className="mr-[8px] ml-[40px] grid h-full grid-cols-14 text-[#69727a]">
                        {seconds.map((s) => (
                            <span key={s} className="border-l border-[#59636a] pl-px">{s}</span>
                        ))}
                    </div>
                    <span className="absolute top-0 right-0 text-[#69727a]">sec</span>
                </div>
                <Toolbar />
                <StatusBar />
            </main>
            <aside className="flex w-9 shrink-0 flex-col gap-[3px] overflow-hidden text-[#b2b9bd]">
                <nav className="flex flex-1 flex-col justify-end overflow-hidden rounded-bl-[4px] bg-[#1f252b]">
                    {moduleIcons.map((m) => (
                        <ModuleRow key={m.name} {...m} />
                    ))}
                    <h3 className="my-[2px] ml-[9px] h-4 border-y border-[#59636a] leading-[14px]">Measurement</h3>
                    {measureIcons.map((m) => (
                        <ModuleRow key={m.name} {...m} />
                    ))}
                    <button type="button" aria-label="Expand modules" className="flex h-8 shrink-0 items-center pl-[9px]">
                        <ChevronRight className="size-3" strokeWidth={3} />
                    </button>
                </nav>
                <div className="h-[65px] shrink-0 rounded-l-[4px] bg-[#1f252b] pt-[15px] pl-[10px] whitespace-nowrap text-[#dfe3e5]">Initial State</div>
            </aside>
            <VariablePitch />
            <SpectralRepair />
            <SpectralDenoise />
        </div>
    );
}
